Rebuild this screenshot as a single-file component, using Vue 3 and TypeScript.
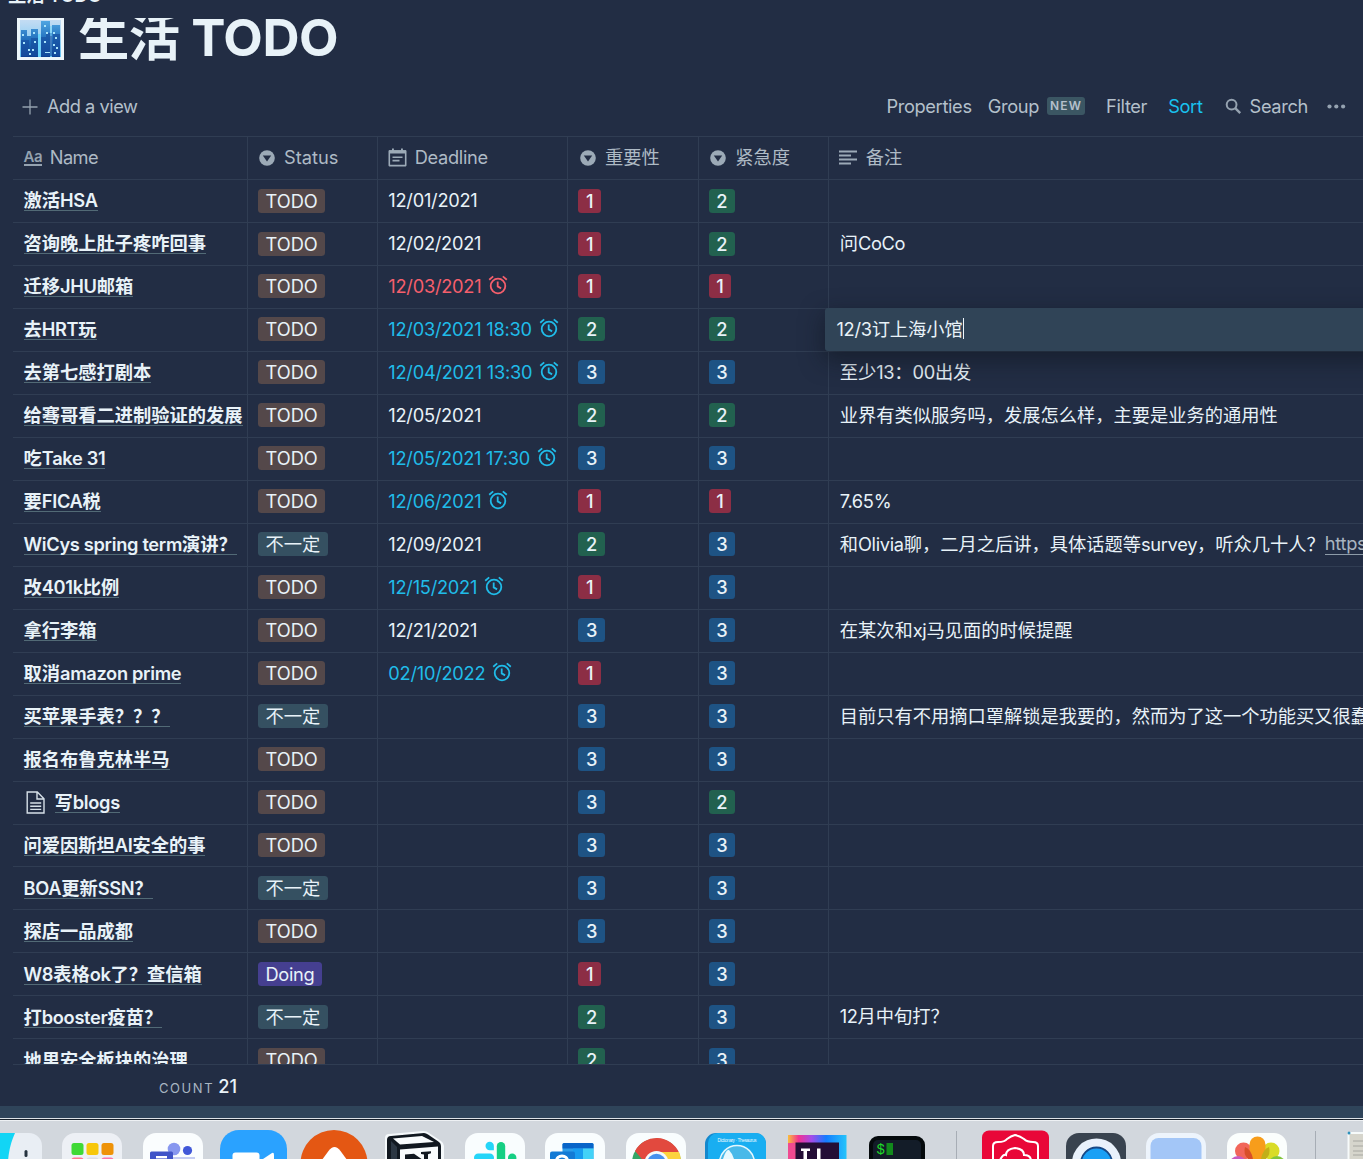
<script setup lang="ts">
import { h, type FunctionalComponent } from 'vue'

type Level = 1 | 2 | 3
type Status = 'TODO' | '不一定' | 'Doing'

interface Task {
  name: string
  status: Status
  date?: string
  alarm?: 'late' | 'soon'
  importance: Level
  urgency: Level
  note?: string
  link?: string
  page?: boolean
}

const tasks: Task[] = [
  { name: '激活HSA', status: 'TODO', date: '12/01/2021', importance: 1, urgency: 2 },
  { name: '咨询晚上肚子疼咋回事', status: 'TODO', date: '12/02/2021', importance: 1, urgency: 2, note: '问CoCo' },
  { name: '迁移JHU邮箱', status: 'TODO', date: '12/03/2021', alarm: 'late', importance: 1, urgency: 1 },
  { name: '去HRT玩', status: 'TODO', date: '12/03/2021 18:30', alarm: 'soon', importance: 2, urgency: 2 },
  { name: '去第七感打剧本', status: 'TODO', date: '12/04/2021 13:30', alarm: 'soon', importance: 3, urgency: 3, note: '至少13：00出发' },
  { name: '给骞哥看二进制验证的发展', status: 'TODO', date: '12/05/2021', importance: 2, urgency: 2, note: '业界有类似服务吗，发展怎么样，主要是业务的通用性' },
  { name: '吃Take 31', status: 'TODO', date: '12/05/2021 17:30', alarm: 'soon', importance: 3, urgency: 3 },
  { name: '要FICA税', status: 'TODO', date: '12/06/2021', alarm: 'soon', importance: 1, urgency: 1, note: '7.65%' },
  { name: 'WiCys spring term演讲？', status: '不一定', date: '12/09/2021', importance: 2, urgency: 3, note: '和Olivia聊，二月之后讲，具体话题等survey，听众几十人？', link: 'https://' },
  { name: '改401k比例', status: 'TODO', date: '12/15/2021', alarm: 'soon', importance: 1, urgency: 3 },
  { name: '拿行李箱', status: 'TODO', date: '12/21/2021', importance: 3, urgency: 3, note: '在某次和xj马见面的时候提醒' },
  { name: '取消amazon prime', status: 'TODO', date: '02/10/2022', alarm: 'soon', importance: 1, urgency: 3 },
  { name: '买苹果手表？？？', status: '不一定', importance: 3, urgency: 3, note: '目前只有不用摘口罩解锁是我要的，然而为了这一个功能买又很蠢' },
  { name: '报名布鲁克林半马', status: 'TODO', importance: 3, urgency: 3 },
  { name: '写blogs', status: 'TODO', importance: 3, urgency: 2, page: true },
  { name: '问爱因斯坦AI安全的事', status: 'TODO', importance: 3, urgency: 3 },
  { name: 'BOA更新SSN？', status: '不一定', importance: 3, urgency: 3 },
  { name: '探店一品成都', status: 'TODO', importance: 3, urgency: 3 },
  { name: 'W8表格ok了？查信箱', status: 'Doing', importance: 1, urgency: 3 },
  { name: '打booster疫苗？', status: '不一定', importance: 2, urgency: 3, note: '12月中旬打？' },
  { name: '地里安全板块的治理', status: 'TODO', importance: 2, urgency: 3 },
]

const statusClass: Record<Status, string> = { TODO: 'todo', 不一定: 'maybe', Doing: 'doing' }
const editingRow = 3

// Latin runs are tracked a little tighter than the Chinese text around them.
const Mixed: FunctionalComponent<{ text: string }> = (props) =>
  h('span', (props.text.match(/[\x20-\x7e]+|[^\x20-\x7e]+/g) ?? []).map((run) =>
    /^[\x20-\x7e]/.test(run) ? h('span', { class: 'latin' }, run) : run,
  ))
Mixed.props = ['text']
</script>

<template>
  <div class="screen">
    <div class="crumb">生活 TODO</div>
    <header class="title">
      <svg class="emoji" width="47" height="42" viewBox="0 0 47 42">
        <defs>
          <linearGradient id="sky" x1="0" y1="0" x2="0" y2="1"><stop offset="0" stop-color="#c4dcf3" /><stop offset="1" stop-color="#63c3f4" /></linearGradient>
          <linearGradient id="tower" x1="0" y1="0" x2="0" y2="1"><stop offset="0" stop-color="#4fa5e2" /><stop offset=".55" stop-color="#1f6cba" /><stop offset="1" stop-color="#0c3f91" /></linearGradient>
        </defs>
        <rect width="47" height="42" fill="#edf6fb" />
        <rect x="3" y="2" width="41" height="37" fill="url(#sky)" />
        <path d="M4 12h6v6h4v-7h7v28H4zM24 3h9v36h-9zM35 7h8v32h-8z" fill="url(#tower)" />
        <path d="M4 22h8v16H4zM14 20h7v18h-7zM24 19h5v-4h6v23H24zM36 16h7v22h-7z" fill="#174f9f" opacity=".65" />
        <path d="M21 16h2.500v23H21zM33.500 8h1v10h-1z" fill="#6bd5fb" />
        <path d="M5 16h2v2H5zM16 14h2v2h-2zM6 24h2v2H6zM17 23h2v2h-2zM11 31h2v2h-2zM15 31h2v2h-2zM12 35h2v2h-2zM27 7h2v2h-2zM29 14h2v2h-2zM27 23h2v2h-2zM36 14h2v2h-2zM38 19h2v2h-2zM36 26h2v2h-2zM39 29h2v2h-2zM28 34h5v1h-5zM37 34h2v2h-2z" fill="#a9e4fb" />
      </svg>
      <h1>生活 TODO</h1>
    </header>

    <nav class="toolbar">
      <svg width="16" height="16" viewBox="0 0 16 16"><path d="M8 .5v15M.5 8h15" stroke="#94a1ae" stroke-width="1.3" /></svg>
      <span class="add">Add a view</span>
      <span class="properties">Properties</span>
      <span class="group">Group</span>
      <span class="new">NEW</span>
      <span class="filter">Filter</span>
      <span class="sort">Sort</span>
      <svg class="lens" width="17" height="17" viewBox="0 0 17 17"><circle cx="6.6" cy="6.6" r="4.9" fill="none" stroke="#95a2b0" stroke-width="2" /><path d="M10.2 10.200l5 5" stroke="#95a2b0" stroke-width="2.4" /></svg>
      <span class="search">Search</span>
      <svg class="dots" width="19" height="5" viewBox="0 0 19 5"><g fill="#95a2b0"><circle cx="2.500" cy="2.500" r="2.100" /><circle cx="9.300" cy="2.500" r="2.100" /><circle cx="16.100" cy="2.500" r="2.100" /></g></svg>
    </nav>

    <main class="table">
      <div class="row head">
        <div class="cell">
          <span class="aa">Aa</span><span class="label first latin">Name</span>
        </div>
        <div class="cell">
          <svg class="pick" width="16" height="16" viewBox="0 0 16 16"><circle cx="8" cy="8" r="7.8" fill="#9caab7" /><path d="M3.800 5.600h8.400L8 11.400z" fill="#222d44" /></svg>
          <span class="label">Status</span>
        </div>
        <div class="cell">
          <svg class="cal" width="19" height="19" viewBox="0 0 19 19"><path d="M1.300 3h16.400v14.600H1.300z" fill="none" stroke="#9caab7" stroke-width="1.600" stroke-linejoin="round" /><path d="M1 2.300h17v3.200H1zM4 .5h1.900v3H4zM13 .5h1.900v3H13z" fill="#9caab7" /><path d="M4.500 9.200h10M4.500 12.600h7" stroke="#9caab7" stroke-width="1.600" /></svg>
          <span class="label deadline">Deadline</span>
        </div>
        <div v-for="label in ['重要性', '紧急度']" :key="label" class="cell">
          <svg class="pick" width="16" height="16" viewBox="0 0 16 16"><circle cx="8" cy="8" r="7.8" fill="#9caab7" /><path d="M3.800 5.600h8.400L8 11.400z" fill="#222d44" /></svg>
          <span class="label">{{ label }}</span>
        </div>
        <div class="cell">
          <svg class="lines" width="18" height="15" viewBox="0 0 18 15"><path d="M0 1.500h18M0 5.500h12M0 9.500h18M0 13.500h12" stroke="#9caab7" stroke-width="2" /></svg>
          <span class="label">备注</span>
        </div>
      </div>

      <div v-for="(task, i) in tasks" :key="task.name" class="row">
        <div class="cell">
          <svg v-if="task.page" class="page" width="20" height="23" viewBox="0 0 20 23"><path d="M1.200 1h10.100l6.700 6.700V22H1.200zM11 1v7h7M4.200 12h11M4.200 15.200h11M4.200 18.400h11" fill="none" stroke="#d6e0e8" stroke-width="1.400" /></svg>
          <Mixed class="name" :text="task.name" />
        </div>
        <div class="cell"><span class="tag" :class="statusClass[task.status]">{{ task.status }}</span></div>
        <div class="cell date" :class="task.alarm">
          <span v-if="task.date">{{ task.date }}</span>
          <svg v-if="task.alarm" class="alarm" width="20" height="20" viewBox="0 0 20 20"><g fill="none" stroke="currentColor" stroke-width="1.800"><circle cx="10" cy="11" r="7.300" /><path d="M9.700 6.600v4.800l3.400 2M1.200 4.700l4-3.300M18.800 4.700l-4-3.300" /></g></svg>
        </div>
        <div class="cell"><span class="tag num" :class="'level-' + task.importance">{{ task.importance }}</span></div>
        <div class="cell"><span class="tag num" :class="'level-' + task.urgency">{{ task.urgency }}</span></div>
        <div class="cell note">
          <Mixed v-if="task.note" :text="task.note" /><span v-if="task.link" class="link">{{ task.link }}</span>
          <div v-if="i === editingRow" class="editor"><Mixed text="12/3订上海小馆" /><i class="caret"></i></div>
        </div>
      </div>
    </main>

    <footer class="count"><span>COUNT</span><b>21</b></footer>
    <div class="band"></div>

    <div class="dock">
      <svg class="app" viewBox="0 0 80.5 39">
        <rect x="10" y="13" width="60" height="60" rx="13" fill="#e9eef4" /><path d="M10 13h33c-4 9-6 17-7 28H10z" fill="#12d5f5" /><rect x="52.500" y="30" width="3" height="7" rx="1.500" fill="#26333f" />
      </svg>
      <svg class="app" viewBox="0 0 80.5 39">
        <rect x="10" y="13" width="60" height="60" rx="13" fill="#edf0f5" />
        <rect x="19.500" y="23" width="12" height="12" rx="2.500" fill="#3fd935" /><rect x="34.500" y="23" width="12" height="12" rx="2.500" fill="#f7c70a" /><rect x="49.500" y="23" width="12" height="12" rx="2.500" fill="#ee9208" />
        <rect x="19.500" y="37.500" width="12" height="12" rx="2.500" fill="#ff7990" /><rect x="34.500" y="37.500" width="12" height="12" rx="2.500" fill="#dedee6" /><rect x="49.500" y="37.500" width="12" height="12" rx="2.500" fill="#fb77aa" />
      </svg>
      <svg class="app" viewBox="0 0 80.5 39">
        <rect x="10" y="13" width="60" height="60" rx="13" fill="#fafdfe" /><rect x="38" y="37" width="24" height="10" fill="#c5cdf3" />
        <circle cx="41" cy="29" r="6.300" fill="#8797ef" /><circle cx="54.500" cy="30.500" r="4.600" fill="#4158d8" /><rect x="17" y="31.500" width="23" height="20" rx="1.500" fill="#4054c8" /><path d="M23 37.200h11" stroke="#fff" stroke-width="2.400" />
      </svg>
      <svg class="app" viewBox="0 0 80.5 39">
        <rect x="7" y="10" width="67" height="67" rx="19" fill="#2aa2ff" /><rect x="19.500" y="32.500" width="27" height="20" rx="3" fill="#fff" /><path d="M50 39l9-6q2-1 2 2v12H50z" fill="#fff" />
      </svg>
      <svg class="app" viewBox="0 0 80.5 39">
        <circle cx="40" cy="43.500" r="33.500" fill="#e45713" /><path d="M25 44l9.500-13q6-8 12 0L56 44z" fill="#fff" />
      </svg>
      <svg class="app" viewBox="0 0 80.5 39">
        <path d="M11 18q0-4 4-4l34-3q4 0 6 2l12 8q3 2 3 5v20H11z" fill="#f5f9fb" /><path d="M13 20q0-4 4-4l33-3q2 0 4 1.500l11 7.500q2 1.500 2 4v15H13z" fill="#111820" /><path d="M19 18.500l29-2.500 12 6-34 2.500z" fill="#f9fcfd" /><path d="M26 29.500l38-3V44H26z" fill="#f9fcfd" /><path d="M17 21l6 6v15h-6z" fill="#2c3743" /><path d="M31 34.500l9-.8 10 7V34.500l-3-.5v-2l10-.7v2l-3 1V43H31z" fill="#111820" />
      </svg>
      <svg class="app" viewBox="0 0 80.5 39">
        <rect x="10" y="13" width="60" height="60" rx="13" fill="#f9fdfe" /><path d="M30.500 26a4.200 4.200 0 1 1 8.400 0v4.200h-4.200a4.200 4.200 0 0 1-4.200-4.200z" fill="#25d5f8" /><rect x="19" y="33.500" width="20" height="8.400" rx="4.200" fill="#25d5f8" /><rect x="41.800" y="22" width="8.400" height="24" rx="4.200" fill="#16cf83" /><path d="M53 42v-4.300a4.200 4.200 0 1 1 8.400 0V42z" fill="#16cf83" />
      </svg>
      <svg class="app" viewBox="0 0 80.5 39">
        <rect x="10" y="13" width="60" height="60" rx="13" fill="#f9fdfe" /><rect x="27.500" y="23" width="31" height="20" rx="1.500" fill="#2c9dea" /><path d="M27.500 24.500q0-1.500 1.500-1.500h28q1.500 0 1.500 1.500v4h-31z" fill="#0864c8" /><path d="M48 28.500h10.500V43H48z" fill="#43d2f7" /><path d="M38 28.500h10V43H38z" fill="#199df0" /><rect x="15" y="31.500" width="25" height="20" rx="2" fill="#137ad5" /><ellipse cx="27" cy="41" rx="5.500" ry="5" fill="none" stroke="#fff" stroke-width="3" />
      </svg>
      <svg class="app" viewBox="0 0 80.5 39">
        <rect x="10" y="13" width="60" height="60" rx="13" fill="#f9fdfe" /><circle cx="40.500" cy="43" r="24.500" fill="#34a565" /><path d="M19 31a24.500 24.500 0 0 1 44 1.500H40.500L30 44z" fill="#e2493e" /><path d="M40 32h23a25 25 0 0 1 2 11H45z" fill="#fcd33e" /><circle cx="40.500" cy="43" r="12" fill="#f4fafc" /><circle cx="40.500" cy="43" r="9.300" fill="#4791ee" />
      </svg>
      <svg class="app" viewBox="0 0 80.5 39">
        <rect x="9" y="13" width="61" height="60" rx="11" fill="#1488cd" /><rect x="12" y="13" width="58" height="60" rx="10" fill="#19aef1" /><text x="21.500" y="21.500" font-size="4.600" textLength="39" fill="#e9f9ff">Dictionary · Thesaurus</text><circle cx="41" cy="43" r="17.500" fill="#49b9e9" stroke="#e4f7fd" stroke-width="1.500" /><path d="M27 39q3-10 6-9 3 3 5 9z" fill="#e9f9fe" />
      </svg>
      <svg class="app" viewBox="0 0 80.5 39">
        <defs><linearGradient id="ij"><stop offset="0" stop-color="#f9bf3b" /><stop offset=".18" stop-color="#f33290" /><stop offset=".4" stop-color="#a34be9" /><stop offset=".65" stop-color="#147cff" /><stop offset="1" stop-color="#25c4fb" /></linearGradient></defs>
        <rect x="11" y="15" width="58.500" height="58" fill="url(#ij)" /><path d="M11 23v16h7.500V23z" fill="#f04a90" /><rect x="18.500" y="22.500" width="43.500" height="43" fill="#240e36" /><path d="M24 28.500h9v2.600h-3V42h-3.500V31.100H24zM40 28.500h3.500V42H40z" fill="#fff" />
      </svg>
      <svg class="app" viewBox="0 0 80.5 39">
        <rect x="12" y="16" width="56" height="56" rx="9" fill="#050a0c" /><rect x="16" y="20" width="48" height="48" rx="5" fill="#131c28" /><text class="mono" x="19.500" y="34" font-size="14" fill="#1fdc28">$</text><rect x="29.500" y="23" width="6.500" height="12" fill="#128b1c" />
      </svg>
      <span class="sep"></span>
      <svg class="app" viewBox="0 0 80.5 39">
        <rect x="7" y="10.500" width="67" height="67" rx="7" fill="#e90738" /><path d="M18 45V26q0-4 5-4 7 0 9-3 4-3 8-4 5 1 9 4 3 3 9 3 5 0 5 4v19M25 45v-5q3-6 6-5 0-6 9-7 9 1 9 7 7 0 7 6v4" fill="none" stroke="#fff" stroke-width="2" />
      </svg>
      <svg class="app" viewBox="0 0 80.5 39">
        <rect x="10" y="13" width="60" height="60" rx="13" fill="#39434f" /><circle cx="40.500" cy="43" r="24.500" fill="#e9f1fb" /><circle cx="40.500" cy="43" r="15.500" fill="#1aa0f5" stroke="#174886" stroke-width="1.800" />
      </svg>
      <svg class="app" viewBox="0 0 80.5 39">
        <rect x="10" y="13" width="60" height="60" rx="13" fill="#edf4fc" /><rect x="14.500" y="18" width="51" height="51" rx="8" fill="#a3c6f7" />
      </svg>
      <svg class="app" viewBox="0 0 80.5 39">
        <rect x="10" y="13" width="60" height="60" rx="13" fill="#fbfefd" /><circle cx="26.500" cy="31" r="8.500" fill="#f1665a" /><circle cx="54" cy="31" r="8.500" fill="#d9dc27" /><circle cx="21" cy="45" r="9" fill="#c85bc0" /><circle cx="60" cy="45" r="9" fill="#83c63c" /><rect x="32.500" y="16.500" width="16" height="24" rx="8" fill="#f79d1b" /><path d="M28 27q6 2 8 12h-5q-5-5-3-12z" fill="#d84f29" /><path d="M52 27q-6 2-8 12h5q5-5 3-12z" fill="#c2af18" />
      </svg>
      <span class="sep"></span>
      <svg class="app" viewBox="0 0 80.5 39">
        <rect x="13.500" y="13" width="50" height="60" fill="#d6d5cc" stroke="#f6fafa" stroke-width="2" /><path d="M18 21h40M18 26h40M18 31h40M18 35h40" stroke="#9c9d97" stroke-width=".8" /><circle cx="14" cy="13" r="1.500" fill="#2f91bc" />
      </svg>
    </div>
  </div>
</template>

<style>
body { margin: 0; background: #222d44; overflow: hidden; }
.latin { letter-spacing: -0.32px; }
</style>

<style scoped>
.screen {
  width: 1363px; height: 1159px; overflow: hidden; display: flex; flex-direction: column;
  background: #222d44; color: #e8f2f8; font-family: Inter, "Noto Sans CJK SC", sans-serif; font-size: 18.25px;
  line-height: 24px; white-space: nowrap;
}
.screen * { box-sizing: border-box; }
svg { display: block; flex: none; }
.crumb { height: 6px; margin-bottom: 12px; flex: none; padding-left: 8px; font-weight: 600; line-height: 22px; display: flex; align-items: flex-end; }
.title { height: 62px; flex: none; display: flex; align-items: flex-start; padding-left: 17px; overflow: hidden; }
.title h1 { margin: -12px 0 0 14px; font-size: 51.3px; line-height: 62px; font-weight: 700; letter-spacing: -0.5px; }
.toolbar { height: 56px; flex: none; display: flex; align-items: center; padding: 0 17px 4px 22px; color: #b4c0cb; letter-spacing: -0.35px; }
.toolbar svg { position: relative; top: 0.5px; }
.add { margin-left: 9px; letter-spacing: -0.5px; }
.properties { margin-left: auto; }
.group { margin-left: 16px; }
.new { margin-left: 8px; width: 38px; height: 18px; border-radius: 3px; background: #3b5663; font-size: 12px; font-weight: 600; line-height: 18px; letter-spacing: 1.1px; text-align: center; }
.filter { margin-left: 21px; }
.sort { margin-left: 21px; color: #19c2ef; }
.lens { margin-left: 22px; }
.search { margin-left: 8px; }
.dots { margin-left: 19px; }
.table { height: 928px; flex: none; margin-left: 13px; border-top: 1px solid #303d53; overflow: hidden; }
.row { display: grid; grid-template-columns: 234.500px 130.300px 190.700px 130.300px 130.400px 1fr; height: 42.970px; position: relative; }
.cell { display: flex; align-items: center; border-right: 1px solid #303d53; border-bottom: 1px solid #303d53; padding-left: 10.500px; min-width: 0; }
.cell:last-child { border-right: 0; }
.head { color: #aebac5; }
.aa { font-size: 15px; font-weight: 600; line-height: 15px; border-bottom: 2px solid #94a2b0; color: #94a2b0; letter-spacing: -0.4px; }
.label { margin: -1.500px 0 0 9px; }
.label.first { margin-left: 7.500px; letter-spacing: -0.600px; }
.deadline { margin-left: 7.500px; letter-spacing: -0.35px; }
.pick { margin-left: 1px; }
.lines { margin-left: -1px; margin-top: -1px; }
.name { font-weight: 600; line-height: 20px; border-bottom: 1px solid #526a76; }
.page { margin: 0 9px 0 2px; }
.tag { height: 24px; padding: 0 7.500px; border-radius: 3.500px; line-height: 25px; margin-top: -0.800px; }
.num { font-weight: 500; margin-left: -0.500px; }
.todo { background: #54484a; }
.maybe { background: #355061; }
.doing { background: #453f90; letter-spacing: -0.35px; }
.level-1 { background: #8c2e45; }
.level-2 { background: #22614f; }
.level-3 { background: #1e5384; }
.date { letter-spacing: -0.26px; }
.late { color: #f55f6c; }
.soon { color: #20bce9; }
.date span, .note > span { margin-top: -2px; }
.alarm { margin: -3px 0 0 7px; }
.note .link { color: #a9b5c0; line-height: 21px; border-bottom: 1px solid #8d9ba8; margin-top: -1px; letter-spacing: -0.3px; }
.editor { position: absolute; left: 812px; right: -20px; top: -1px; height: 43.500px; display: flex; align-items: center; padding-left: 11.500px; border-radius: 3px; background: #304457; box-shadow: 0 8px 22px 2px rgba(13, 19, 28, .5); z-index: 2; }
.editor > span { margin-top: -2px; }
.caret { width: 1px; height: 21px; background: #eef6fa; margin-top: -2px; }
.count { height: 42px; flex: none; margin-left: 13px; border-top: 1px solid #303d53; padding: 9px 1126px 0 0; display: flex; justify-content: flex-end; align-items: baseline; }
.count span { font-size: 13px; letter-spacing: 1.600px; color: #a9b6c2; }
.count b { margin-left: 4px; font-weight: 500; }
.band { height: 12px; flex: none; background: #2f445a; }
.dock { height: 41px; flex: none; display: flex; background: #d2d7dd; box-shadow: inset 0 1px #dce2e7, inset 0 2px #18212b, inset 0 3px #eef1f4; padding-top: 2px; }
.app { width: 80.500px; height: 39px; }
.app:first-child { margin-left: -28.500px; }
.app text { font-family: "Liberation Sans", sans-serif; }
.app text.mono { font-family: "Liberation Mono", monospace; }
.sep { flex: none; width: 37.500px; height: 39px; display: flex; justify-content: center; }
.sep::before { content: ''; width: 1px; margin-top: 11px; background: #a7adb5; }
</style>
